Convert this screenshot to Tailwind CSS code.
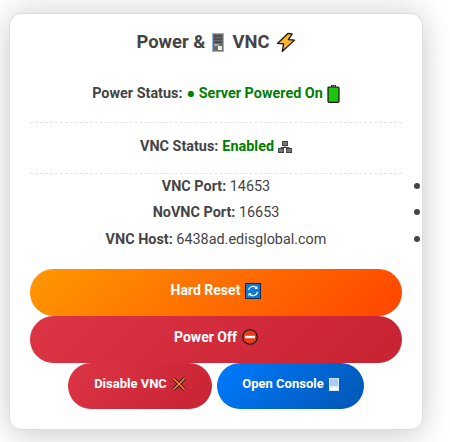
<!DOCTYPE html>
<html>
<head>
  <title>Power & VNC</title>
  <meta charset="utf-8">
  <script src="https://cdn.jsdelivr.net/npm/@tailwindcss/browser@4"></script>
</head>
<body class="bg-white font-['Roboto',sans-serif] overflow-hidden">
  <div class="w-[450px] h-[442px] pt-[13px] pl-[9px]">
    <div class="w-[414px] h-[417px] bg-white border border-[#dcdcdc] rounded-[12px] shadow-[0_10px_30px_rgba(0,0,0,0.15),0_-12px_30px_rgba(0,0,0,0.08)] px-[20px] pt-[15px] text-[#444]">

      <h2 class="h-[26px] flex items-center justify-center text-[18.4px] leading-[26px] font-bold">
        <span>Power &amp;</span>
        <!-- server -->
        <svg class="w-[12px] h-[19px] ml-[7px]" viewBox="0 0 12 19">
          <rect x="0.5" y="0.5" width="11" height="18" fill="#6b6b6b" stroke="#8fb4d8"/>
          <path d="M2 3h8M2 6h8M2 9h8" stroke="#333" stroke-width="1"/>
          <path d="M2 12h5" stroke="#ddd" stroke-width="1"/>
          <rect x="6" y="13" width="4" height="4" fill="#eee"/>
        </svg>
        <span class="ml-[8px]">VNC</span>
        <!-- bolt -->
        <svg class="w-[20px] h-[21px] ml-[6px]" viewBox="0 0 21 21">
          <path d="M12.5 1L1.5 11.5L8 12L6.5 20L19.5 8L13 7.5L17 1.5Z" fill="#f6b632" stroke="#111" stroke-width="1.3" stroke-linejoin="round"/>
        </svg>
      </h2>

      <div class="h-[69px] pt-[28px] flex justify-center gap-[4px] text-[14.4px] leading-[24px] font-bold border-b border-dashed border-[#e4e4e4] mt-[-1px]">
        <span>Power Status:</span>
        <span class="text-[#008000]">● Server Powered On</span>
        <svg class="w-[13px] h-[18px] mt-[3px]" viewBox="0 0 13 18">
          <rect x="4.5" y="0.5" width="4" height="2" fill="#bbb" stroke="#222" stroke-width="0.8"/>
          <rect x="1" y="2" width="11" height="15.3" rx="1" fill="#1fc40e" stroke="#111" stroke-width="1.2"/>
        </svg>
      </div>

      <div class="h-[51px] pt-[12px] flex justify-center gap-[4px] text-[14.4px] leading-[24px] font-bold border-b border-dashed border-[#e4e4e4]">
        <span>VNC Status:</span>
        <span class="text-[#008000]">Enabled</span>
        <svg class="w-[14px] h-[12px] mt-[6px]" viewBox="0 0 14 12">
          <rect x="4.5" y="0.5" width="5" height="4" fill="#777" stroke="#444"/>
          <rect x="0.5" y="7.5" width="5" height="4" fill="#777" stroke="#444"/>
          <rect x="8.5" y="7.5" width="5" height="4" fill="#777" stroke="#444"/>
          <path d="M7 5v1.5M3 7.5V6.5h8v1" stroke="#444" fill="none"/>
        </svg>
      </div>

      <ul dir="rtl" class="list-disc text-[14.4px] text-[#444] marker:text-[#444] marker:text-[18px] mt-[-1px]">
        <li class="h-[26px] leading-[24px] text-center"><span dir="ltr" class="inline-block text-[14.4px]"><b class="font-bold">VNC Port:</b> 14653</span></li>
        <li class="h-[27px] leading-[24px] text-center"><span dir="ltr" class="inline-block text-[14.4px]"><b class="font-bold">NoVNC Port:</b> 16653</span></li>
        <li class="h-[27px] leading-[24px] text-center"><span dir="ltr" class="inline-block text-[14.4px]"><b class="font-bold">VNC Host:</b> 6438ad.edisglobal.com</span></li>
      </ul>

      <div class="mt-[16px] flex flex-col">
        <button class="h-[47px] rounded-[25px] bg-[linear-gradient(135deg,#ff9800,#ff4500)] text-white text-[14px] font-bold flex items-center justify-center gap-[5px] pb-[4px]">
          <span>Hard Reset</span>
          <svg class="w-[16px] h-[16px]" viewBox="0 0 16 16">
            <rect x="0.5" y="0.5" width="15" height="15" fill="#0f78d6" stroke="#0b2a4a"/>
            <path d="M3.5 7a4.6 4.6 0 0 1 8-2" fill="none" stroke="#fff" stroke-width="1.2"/>
            <path d="M12.5 9a4.6 4.6 0 0 1-8 2" fill="none" stroke="#fff" stroke-width="1.2"/>
            <path d="M12.5 2.8v3.2h-3zM3.5 13.2V10h3z" fill="#fff"/>
          </svg>
        </button>
        <button class="h-[47px] rounded-[25px] bg-[linear-gradient(135deg,#dc3545,#c82333)] text-white text-[14px] font-bold flex items-center justify-center gap-[5px] pb-[5px]">
          <span>Power Off</span>
          <svg class="w-[16px] h-[16px]" viewBox="0 0 16 16">
            <circle cx="8" cy="8" r="7.3" fill="#ec3a1c" stroke="#111" stroke-width="1.1"/>
            <rect x="3" y="6.8" width="10" height="2.4" fill="#fff"/>
          </svg>
        </button>
        <div class="flex justify-center gap-[5px]">
          <button class="w-[144px] h-[46px] rounded-[25px] bg-[linear-gradient(135deg,#dc3545,#c82333)] text-white text-[13px] font-bold flex items-center justify-center gap-[5px] pb-[4px]">
            <span>Disable VNC</span>
            <svg class="w-[14px] h-[14px]" viewBox="0 0 14 14">
              <path d="M1.5 1.5l11 11M12.5 1.5l-11 11" stroke="#111" stroke-width="3.6"/>
              <path d="M1.5 1.5l11 11M12.5 1.5l-11 11" stroke="#f0702a" stroke-width="1.8"/>
            </svg>
          </button>
          <button class="w-[147px] h-[46px] rounded-[25px] bg-[linear-gradient(135deg,#007bff,#0056b3)] text-white text-[13px] font-bold flex items-center justify-center gap-[5px] pb-[4px]">
            <span>Open Console</span>
            <svg class="w-[10px] h-[13px]" viewBox="0 0 10 13">
              <rect width="10" height="13" fill="#d8e8fa"/>
              <rect x="1" y="1" width="8" height="7" fill="#a9cbf2"/>
              <rect x="1" y="9.5" width="8" height="2.5" fill="#ffffff"/>
            </svg>
          </button>
        </div>
      </div>
    </div>
  </div>
</body>
</html>
